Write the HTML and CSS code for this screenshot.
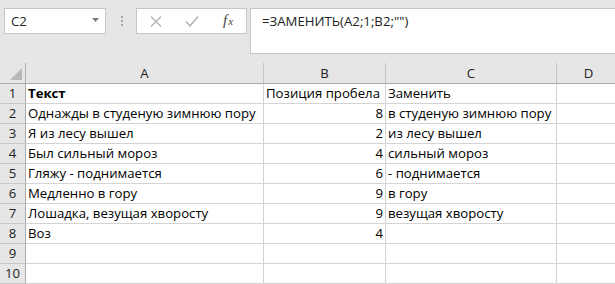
FILE: index.html
```html
<!DOCTYPE html>
<html lang="ru">

<head>
  <meta charset="UTF-8" />
  <meta name="viewport" content="width=device-width, initial-scale=1.0" />
  <title>ЗАМЕНИТЬ</title>
  <link rel="stylesheet" href="styles.css">
</head>

<body>
  <div class="toolbar">
    <div class="name-box">
      <span>C2</span>
      <svg class="drop" width="7" height="4" viewBox="0 0 7 4"><path d="M0 0h7L3.5 4z" fill="#7a7a7a" /></svg>
    </div>
    <div class="grip"><i></i><i></i><i></i></div>
    <div class="fx-box">
      <svg class="icon" width="12" height="11" viewBox="0 0 12 11">
        <path d="M1 0.5l10 10M11 0.5l-10 10" stroke="#b3b3b3" stroke-width="1.3" fill="none" />
      </svg>
      <svg class="icon" width="14" height="11" viewBox="0 0 14 11">
        <path d="M1 5.5l4 4.5 8-9.5" stroke="#b3b3b3" stroke-width="1.5" fill="none" />
      </svg>
      <span class="fx">f<span>x</span></span>
    </div>
    <div class="formula">=ЗАМЕНИТЬ(A2;1;B2;"")</div>
  </div>

  <div class="sheet">
    <div class="hd corner">
      <svg width="12" height="12" viewBox="0 0 12 12"><path d="M12 0v12H0z" fill="#b8b8b8" /></svg>
    </div>
    <div class="hd">A</div>
    <div class="hd">B</div>
    <div class="hd">C</div>
    <div class="hd">D</div>

    <div class="rn">1</div>
    <div class="cell bold">Текст</div>
    <div class="cell">Позиция пробела</div>
    <div class="cell">Заменить</div>
    <div class="cell"></div>

    <div class="rn">2</div>
    <div class="cell">Однажды в студеную зимнюю пору</div>
    <div class="cell num">8</div>
    <div class="cell">в студеную зимнюю пору</div>
    <div class="cell"></div>

    <div class="rn">3</div>
    <div class="cell">Я из лесу вышел</div>
    <div class="cell num">2</div>
    <div class="cell">из лесу вышел</div>
    <div class="cell"></div>

    <div class="rn">4</div>
    <div class="cell">Был сильный мороз</div>
    <div class="cell num">4</div>
    <div class="cell">сильный мороз</div>
    <div class="cell"></div>

    <div class="rn">5</div>
    <div class="cell">Гляжу - поднимается</div>
    <div class="cell num">6</div>
    <div class="cell">- поднимается</div>
    <div class="cell"></div>

    <div class="rn">6</div>
    <div class="cell">Медленно в гору</div>
    <div class="cell num">9</div>
    <div class="cell">в гору</div>
    <div class="cell"></div>

    <div class="rn">7</div>
    <div class="cell">Лошадка, везущая хворосту</div>
    <div class="cell num">9</div>
    <div class="cell">везущая хворосту</div>
    <div class="cell"></div>

    <div class="rn">8</div>
    <div class="cell">Воз</div>
    <div class="cell num">4</div>
    <div class="cell"></div>
    <div class="cell"></div>

    <div class="rn">9</div>
    <div class="cell"></div>
    <div class="cell"></div>
    <div class="cell"></div>
    <div class="cell"></div>

    <div class="rn">10</div>
    <div class="cell"></div>
    <div class="cell"></div>
    <div class="cell"></div>
    <div class="cell"></div>
  </div>
</body>

</html>
```
FILE: styles.css
```css
body {
  margin: 0;
  width: 615px;
  height: 284px;
  overflow: hidden;
  font-family: "Open Sans", sans-serif;
  font-size: 13.2px;
  color: #000;
  background-color: #e6e6e6;
}

.toolbar {
  display: flex;
  align-items: flex-start;
  height: 63px;
  padding-top: 8px;
  box-sizing: border-box;
}

.name-box {
  display: flex;
  align-items: center;
  justify-content: space-between;
  box-sizing: border-box;
  width: 102px;
  height: 26px;
  margin-left: 4px;
  padding: 0 6px 0 6px;
  border: 1px solid #c6c6c6;
  background-color: #fff;
  line-height: 24px;
  color: #222;
}

.name-box .drop {
  margin-top: -2px;
}

.grip {
  display: flex;
  flex-direction: column;
  gap: 2px;
  margin: 8px 0 0 15px;
}

.grip i {
  width: 2px;
  height: 2px;
  background-color: #a6a6a6;
}

.fx-box {
  display: flex;
  align-items: center;
  gap: 23px;
  box-sizing: border-box;
  width: 111px;
  height: 26px;
  margin-left: 13px;
  padding-left: 13px;
  border: 1px solid #c6c6c6;
  background-color: #fff;
}

.fx-box .icon {
  flex-shrink: 0;
}

.fx {
  font-family: "Liberation Serif", serif;
  font-style: italic;
  font-size: 15px;
  color: #444;
  margin-left: 1px;
  margin-top: -2px;
}

.fx span {
  font-size: 11px;
  margin-left: 1px;
}

.formula {
  flex: 1;
  box-sizing: border-box;
  height: 46px;
  margin-left: 3px;
  margin-right: -4px;
  padding: 3px 0 0 11px;
  border: 1px solid #c6c6c6;
  background-color: #fff;
  color: #222;
  white-space: nowrap;
}

.sheet {
  display: grid;
  grid-template-columns: 26px 238px 122px 171px 64px;
  grid-template-rows: 21px repeat(10, 20px);
  background-color: #fff;
}

.sheet > div {
  box-sizing: border-box;
  line-height: 19px;
  white-space: nowrap;
  overflow: hidden;
}

.hd {
  background-color: #e6e6e6;
  border-right: 1px solid #c4c4c4;
  border-bottom: 1px solid #ababab;
  text-align: center;
  line-height: 20px !important;
  color: #222;
}

.corner {
  display: flex;
  justify-content: flex-end;
  align-items: flex-end;
  padding: 0 3px 3px 0;
  border-right-color: #ababab;
}

.rn {
  background-color: #e6e6e6;
  border-right: 1px solid #ababab;
  border-bottom: 1px solid #c8c8c8;
  text-align: center;
  color: #222;
}

.cell {
  border-right: 1px solid #d4d4d4;
  border-bottom: 1px solid #d4d4d4;
  padding: 0 2px;
}

.bold {
  font-weight: bold;
}

.num {
  text-align: right;
}
```
